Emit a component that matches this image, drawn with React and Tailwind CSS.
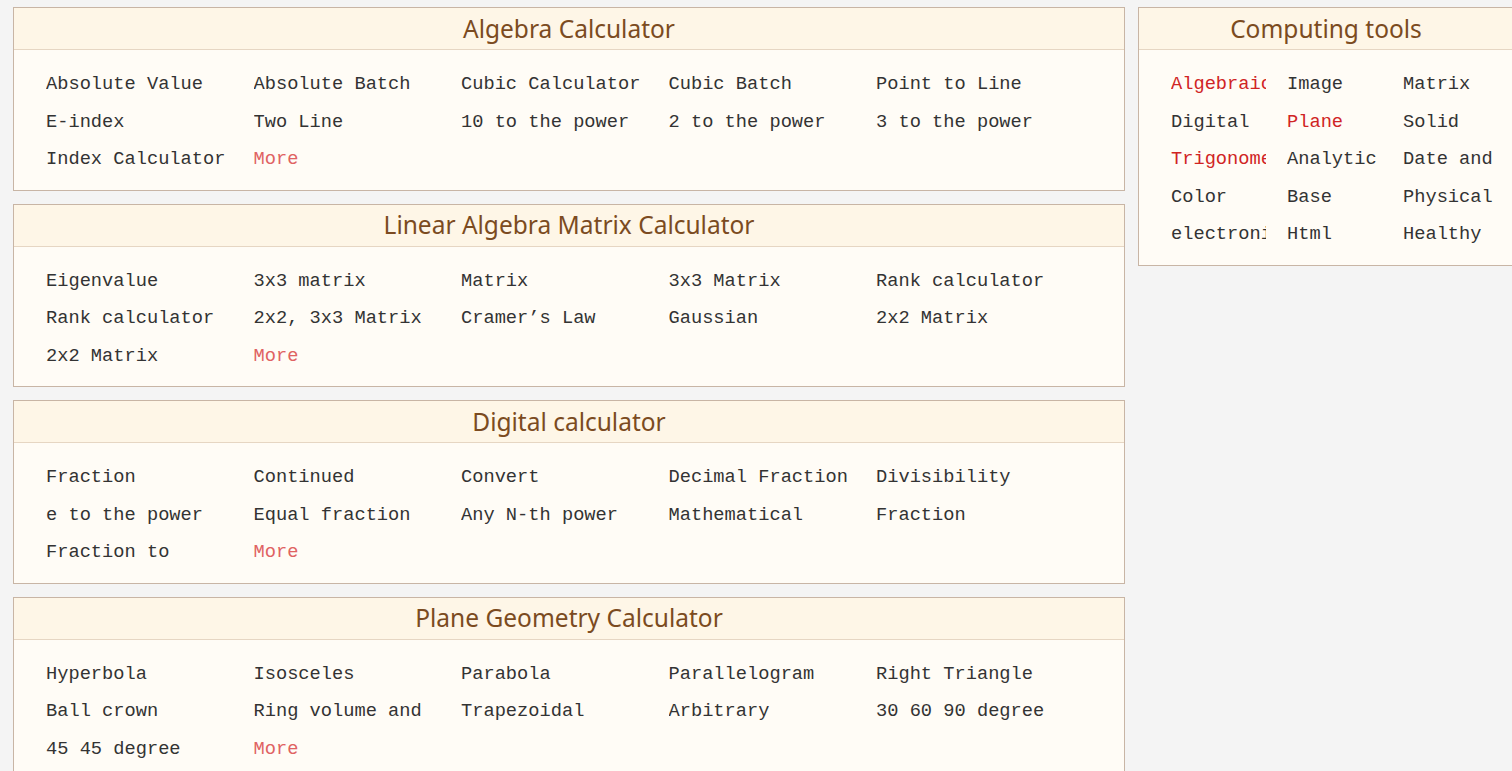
import React from 'react';

const sections = [
  {
    title: 'Algebra Calculator',
    items: ['Absolute Value', 'Absolute Batch', 'Cubic Calculator', 'Cubic Batch', 'Point to Line', 'E-index', 'Two Line', '10 to the power', '2 to the power', '3 to the power', 'Index Calculator'],
  },
  {
    title: 'Linear Algebra Matrix Calculator',
    items: ['Eigenvalue', '3x3 matrix', 'Matrix', '3x3 Matrix', 'Rank calculator', 'Rank calculator', '2x2, 3x3 Matrix', 'Cramer\u2019s Law', 'Gaussian', '2x2 Matrix', '2x2 Matrix'],
  },
  {
    title: 'Digital calculator',
    items: ['Fraction', 'Continued', 'Convert', 'Decimal Fraction', 'Divisibility', 'e to the power', 'Equal fraction', 'Any N-th power', 'Mathematical', 'Fraction', 'Fraction to'],
  },
  {
    title: 'Plane Geometry Calculator',
    items: ['Hyperbola', 'Isosceles', 'Parabola', 'Parallelogram', 'Right Triangle', 'Ball crown', 'Ring volume and', 'Trapezoidal', 'Arbitrary', '30 60 90 degree', '45 45 degree'],
  },
];

const tools = [
  { t: 'Algebraic', red: true }, { t: 'Image' }, { t: 'Matrix' },
  { t: 'Digital' }, { t: 'Plane', red: true }, { t: 'Solid' },
  { t: 'Trigonometry', red: true }, { t: 'Analytic' }, { t: 'Date and' },
  { t: 'Color' }, { t: 'Base' }, { t: 'Physical' },
  { t: 'electronic' }, { t: 'Html' }, { t: 'Healthy' },
];

const mono = { fontFamily: '"Liberation Mono", monospace' };
const sans = { fontFamily: '"Noto Sans", "Open Sans", sans-serif' };

function Header({ title }) {
  return (
    <div className="h-[42px] bg-[#fef6e7] border-b border-[#e6d6c3] flex items-center justify-center text-[24.5px] text-[#7b4b21] pt-px" style={sans}>
      {title}
    </div>
  );
}

function Section({ title, items }) {
  return (
    <div className="border border-[#c8b5a5] bg-[#fffcf6]">
      <Header title={title} />
      <ul className="grid grid-cols-[repeat(5,207.5px)] pl-8 pt-4 pb-[11px] text-[18.7px] text-[#333]" style={mono}>
        {items.map((it, i) => (
          <li key={i} className="h-[37.5px] leading-[37.5px] whitespace-nowrap overflow-hidden pr-4">{it}</li>
        ))}
        <li className="h-[37.5px] leading-[37.5px] text-[#e06262]">More</li>
      </ul>
    </div>
  );
}

export default function App() {
  return (
    <div className="w-[1512px] h-[771px] overflow-hidden bg-[#f4f4f4]">
      <div className="flex gap-[13px] pl-[13px] pt-[7px]">
        <div className="w-[1112px] shrink-0 flex flex-col gap-[13px]">
          {sections.map((s) => (
            <Section key={s.title} {...s} />
          ))}
        </div>
        <div className="w-[376px] shrink-0 self-start border border-[#c8b5a5] bg-[#fffcf6]">
          <Header title="Computing tools" />
          <ul className="grid grid-cols-[repeat(3,116px)] pl-8 pt-4 pb-[11px] text-[18.7px] text-[#333]" style={mono}>
            {tools.map((it, i) => (
              <li key={i} className="h-[37.5px] leading-[37.5px] pr-[21px]">
                <div className={`w-[95px] whitespace-nowrap overflow-hidden ${it.red ? 'text-[#d02424]' : ''}`}>{it.t}</div>
              </li>
            ))}
          </ul>
        </div>
      </div>
    </div>
  );
}
